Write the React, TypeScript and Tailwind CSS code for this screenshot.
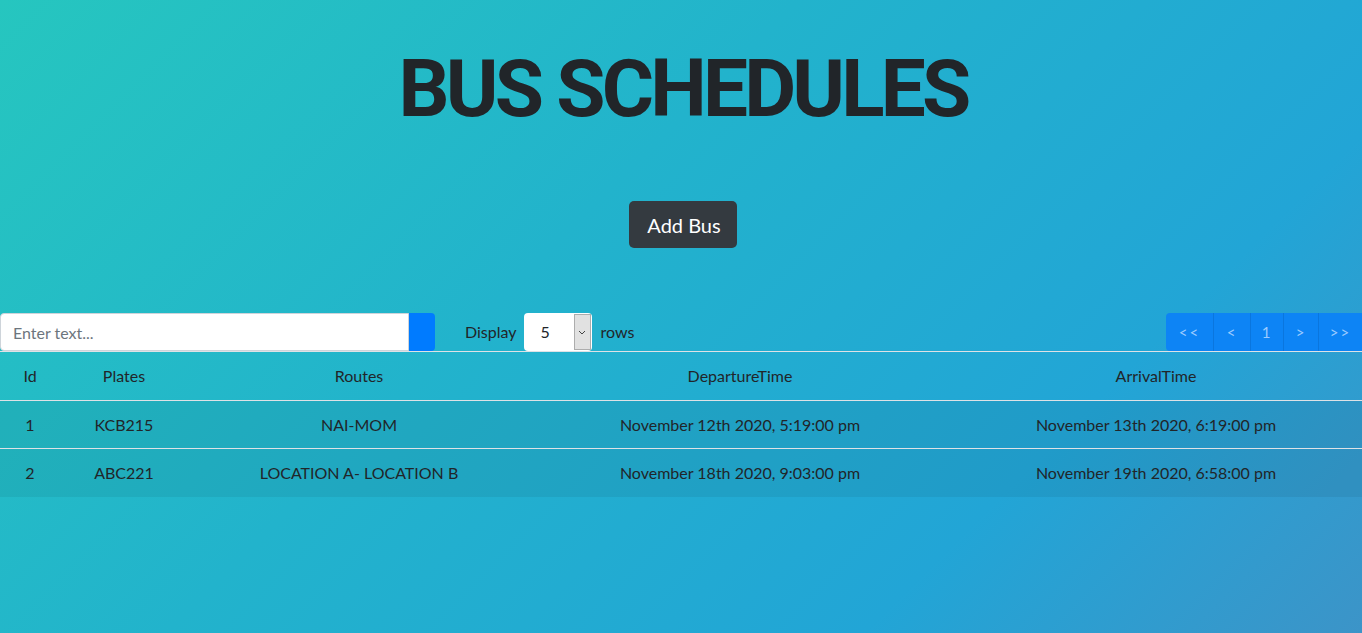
import React from 'react';

const buses = [
  {
    id: 1,
    plates: 'KCB215',
    route: 'NAI-MOM',
    departure: 'November 12th 2020, 5:19:00 pm',
    arrival: 'November 13th 2020, 6:19:00 pm',
  },
  {
    id: 2,
    plates: 'ABC221',
    route: 'LOCATION A- LOCATION B',
    departure: 'November 18th 2020, 9:03:00 pm',
    arrival: 'November 19th 2020, 6:58:00 pm',
  },
];

const pages = [
  { label: '<<', w: 'w-[47px]' },
  { label: '<', w: 'w-[37px]' },
  { label: '1', w: 'w-[33px]' },
  { label: '>', w: 'w-[35px]' },
  { label: '>>', w: 'w-[44px]' },
];

export default function App() {
  return (
    <div className="h-[633px] w-full overflow-hidden bg-[linear-gradient(135deg,#26c6bf_0%,#22b3cc_40%,#22a5d6_75%,#3c94c8_100%)] font-['Lato','Noto_Sans',sans-serif] text-[#212529]">
      <h1 className="pl-[4px] pt-[41px] text-center font-['Roboto',sans-serif] text-[80px] font-bold leading-[96px] tracking-[-3.8px]">
        BUS SCHEDULES
      </h1>

      <div className="mt-[64px] flex justify-center pl-[4px]">
        <button className="h-[47px] w-[108px] rounded-[5px] bg-[#343a40] pl-[2px] text-[20px] text-white">
          Add Bus
        </button>
      </div>

      <div className="mt-[65px] flex h-[38px] items-center">
        <div className="flex h-[38px]">
          <input
            placeholder="Enter text..."
            className="h-[38px] w-[409px] rounded-l-[4px] border border-[#ced4da] bg-white px-3 text-[16px] text-[#495057] placeholder:text-[#6c757d] outline-none"
          />
          <div className="h-[38px] w-[26px] rounded-r-[4px] bg-[#007bff]" />
        </div>

        <span className="ml-[30px] text-[16px]">Display</span>
        <div className="ml-[7px] flex h-[38px] w-[68px] overflow-hidden rounded-[4px] bg-white">
          <span className="flex flex-1 items-center pl-[17px] text-[16px]">5</span>
          <span className="my-[1px] mr-[1px] flex w-[17px] items-center justify-center border border-[#adadad] bg-[#e1e1e1]">
            <svg width="8" height="5" viewBox="0 0 8 5" fill="none" stroke="#444" strokeWidth="1">
              <path d="M1 1l3 3 3-3" />
            </svg>
          </span>
        </div>
        <span className="ml-[9px] text-[16px]">rows</span>

        <div className="ml-auto flex h-[38px] overflow-hidden rounded-l-[4px] bg-[#0d84f5]">
          {pages.map((p, i) => (
            <span
              key={p.label}
              className={`${p.w} flex items-center justify-center text-[15px] tracking-[2px] text-[#9ccbff] ${i > 0 ? 'border-l border-[#0a76de]' : ''}`}
            >
              {p.label}
            </span>
          ))}
        </div>
      </div>

      <table className="w-full border-collapse text-[16px]">
        <thead>
          <tr className="h-[49px] border-t border-b border-[#dee2e6]">
            <th className="w-[60px] font-normal">Id</th>
            <th className="w-[128px] font-normal">Plates</th>
            <th className="w-[342px] font-normal">Routes</th>
            <th className="w-[420px] font-normal">DepartureTime</th>
            <th className="font-normal">ArrivalTime</th>
          </tr>
        </thead>
        <tbody>
          {buses.map((b, i) => (
            <tr
              key={b.id}
              className={`h-[48px] bg-[rgba(0,0,0,0.06)] ${i === 0 ? 'border-b border-[#dee2e6]' : ''}`}
            >
              <td className="text-center">{b.id}</td>
              <td className="text-center">{b.plates}</td>
              <td className="text-center">{b.route}</td>
              <td className="text-center">{b.departure}</td>
              <td className="text-center">{b.arrival}</td>
            </tr>
          ))}
        </tbody>
      </table>
    </div>
  );
}
